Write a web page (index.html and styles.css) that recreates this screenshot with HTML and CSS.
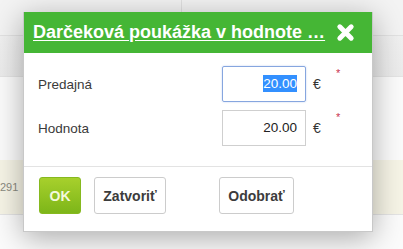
FILE: index.html
```html
<!DOCTYPE html>
<html lang="sk">
<head>
    <meta charset="UTF-8">
    <meta name="viewport" content="width=device-width, initial-scale=1.0">
    <title>Darčeková poukážka</title>
    <link rel="stylesheet" href="styles.css">
</head>
<body>
    <div class="page">
        <div class="page-top"><span class="page-divider"></span></div>
        <div class="page-bar"></div>
        <div class="page-gap"></div>
        <div class="page-row"><span class="row-num">291</span></div>
        <div class="page-rest"></div>

        <div class="dialog">
            <div class="dialog-header">
                <a class="dialog-title" href="#">Darčeková poukážka v hodnote …</a>
                <svg class="dialog-close" viewBox="0 0 20 20" width="19" height="19">
                    <path d="M4 4 L16 16 M16 4 L4 16" stroke="#fff" stroke-width="5.2" stroke-linecap="round"/>
                </svg>
            </div>

            <div class="dialog-body">
                <div class="form-row">
                    <label class="form-label">Predajná</label>
                    <div class="form-input focused"><span class="selected">20.00</span></div>
                    <span class="form-unit">€</span>
                    <span class="form-req">*</span>
                </div>
                <div class="form-row">
                    <label class="form-label">Hodnota</label>
                    <div class="form-input">20.00</div>
                    <span class="form-unit">€</span>
                    <span class="form-req">*</span>
                </div>
            </div>

            <div class="dialog-footer">
                <button class="btn btn-ok">OK</button>
                <button class="btn btn-close">Zatvoriť</button>
                <button class="btn btn-remove">Odobrať</button>
            </div>
        </div>
    </div>
</body>
</html>
```

FILE: styles.css
```css
* {
    margin: 0;
    padding: 0;
    box-sizing: border-box;
}

body {
    font-family: Arial, 'Liberation Sans', sans-serif;
    background-color: #fafafa;
    overflow: hidden;
}

.page {
    position: relative;
    width: 403px;
    height: 249px;
}

.page-top {
    height: 36px;
    background-color: #f3f3f3;
    border-bottom: 1px solid #e2e2e2;
    position: relative;
}

.page-divider {
    position: absolute;
    left: 181px;
    top: 0;
    width: 1px;
    height: 12px;
    background-color: #e0e0e0;
}

.page-bar {
    height: 41px;
    background: linear-gradient(#f0f0f0, #ebebeb);
    border-bottom: 1px solid #e4e4e4;
}

.page-gap {
    height: 83px;
    background-color: #fbfbfb;
}

.page-row {
    height: 55px;
    background-color: #f6f4e6;
    border-bottom: 1px solid #e4e4e4;
    padding-top: 17px;
}

.row-num {
    font-size: 11px;
    color: #8a8a80;
}

.page-rest {
    height: 34px;
    background-color: #fbfbfb;
}

.dialog {
    position: absolute;
    left: 23px;
    top: 12px;
    width: 350px;
    background-color: #fff;
    border: 1px solid #c8c8c8;
    border-top: none;
    box-shadow: 0 6px 28px rgba(0, 0, 0, 0.32);
}

.dialog-header {
    height: 41px;
    background-color: #45b635;
    display: flex;
    align-items: center;
    justify-content: space-between;
    padding: 0 17px 0 9px;
}

.dialog-title {
    color: #fff;
    font-size: 18px;
    font-weight: bold;
    text-decoration: underline;
    text-underline-offset: 2px;
    white-space: nowrap;
}

.dialog-close {
    display: block;
}

.dialog-body {
    padding: 13px 0 20px 14px;
    border-bottom: 1px solid #e3e3e3;
    display: flex;
    flex-direction: column;
    gap: 8px;
}

.form-row {
    display: flex;
    align-items: center;
    height: 36px;
}

.form-label {
    flex: 1;
    font-size: 13.5px;
    color: #3a3a3a;
}

.form-input {
    width: 84px;
    height: 36px;
    border: 1px solid #cfcfcf;
    text-align: right;
    padding-right: 8px;
    line-height: 34px;
    font-size: 13.5px;
    color: #222;
}

.form-input.focused {
    border-color: #86a6df;
    border-radius: 2px;
    box-shadow: 0 0 2px rgba(100, 140, 220, 0.4);
}

.selected {
    background-color: #3390ff;
    color: #fff;
    padding: 1px 0;
}

.form-unit {
    width: 30px;
    padding-left: 7px;
    font-size: 14px;
    color: #333;
}

.form-req {
    width: 36px;
    align-self: flex-start;
    margin-top: 1px;
    font-size: 11px;
    color: #c9334f;
}

.dialog-footer {
    height: 64px;
    display: flex;
    align-items: flex-start;
    padding: 10px 0 0 15px;
}

.btn {
    height: 37px;
    padding: 0;
    background-color: #fff;
    border: 1px solid #cccccc;
    border-radius: 3px;
    font-family: Arial, 'Liberation Sans', sans-serif;
    font-size: 14px;
    font-weight: bold;
    color: #3c3c3c;
    margin-right: 13px;
}

.btn-ok {
    width: 42px;
    background: linear-gradient(#a7d02c, #7db619);
    border-color: #86b91f;
    color: #f3f9dc;
}

.btn-close {
    width: 72px;
}

.btn-remove {
    width: 75px;
    margin-left: 40px;
}
```
